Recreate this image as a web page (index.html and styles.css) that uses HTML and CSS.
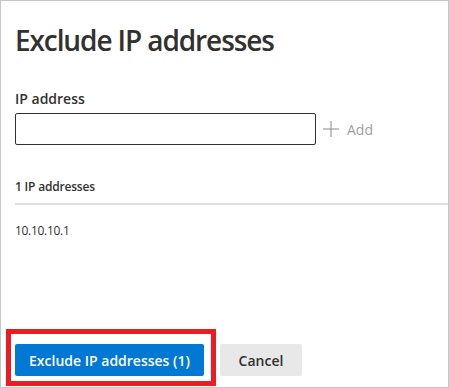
FILE: index.html
```html
<!DOCTYPE html>
<html lang="en">
  <head>
    <meta charset="UTF-8" />
    <meta name="viewport" content="width=device-width, initial-scale=1.0" />
    <title>Exclude IP addresses</title>
    <link rel="stylesheet" href="styles.css">
  </head>

  <body>
    <main class="panel">
      <h1 class="title">Exclude IP addresses</h1>

      <form class="add-form" id="addForm">
        <label class="field-label" for="ipInput">IP address</label>
        <div class="field-row">
          <input class="ip-input" id="ipInput" type="text" />
          <button class="add-btn" type="submit">
            <svg class="add-icon" width="16" height="16" viewBox="0 0 16 16">
              <path d="M8 0v16M0 8h16" stroke="#8a8886" stroke-width="1" fill="none" />
            </svg>
            <span>Add</span>
          </button>
        </div>
      </form>

      <section class="ip-list">
        <p class="list-count">1 IP addresses</p>
        <ul class="list-items">
          <li>10.10.10.1</li>
        </ul>
      </section>

      <footer class="actions">
        <div class="primary-wrap">
          <button class="btn btn-primary">Exclude IP addresses (1)</button>
          <span class="highlight"></span>
        </div>
        <button class="btn btn-default">Cancel</button>
      </footer>
    </main>
  </body>
</html>
```

FILE: styles.css
```css
html,
body {
  margin: 0;
  padding: 0;
}

body {
  font-family: "Open Sans", "Noto Sans", sans-serif;
  color: #323130;
  background: #ffffff;
}

.panel {
  box-sizing: border-box;
  width: 449px;
  height: 388px;
  border: 1px solid #c6c6c6;
  padding: 0 0 0 14px;
  display: flex;
  flex-direction: column;
}

.title {
  margin: 21px 0 0 0;
  font-size: 28px;
  line-height: 36px;
  font-weight: 600;
  letter-spacing: -1.1px;
}

.add-form {
  margin-top: 31px;
}

.field-label {
  display: block;
  font-size: 14px;
  line-height: 20px;
  font-weight: 600;
  margin-bottom: 4px;
}

.field-row {
  display: flex;
  align-items: center;
}

.ip-input {
  box-sizing: border-box;
  width: 301px;
  height: 32px;
  border: 1px solid #323130;
  border-radius: 2px;
  margin: 0;
  padding: 0 8px;
  font: inherit;
  font-size: 14px;
}

.add-btn {
  display: flex;
  align-items: center;
  gap: 8px;
  border: none;
  background: none;
  padding: 0 0 0 7px;
  font-family: inherit;
  font-size: 14px;
  color: #a19f9d;
  cursor: pointer;
}

.ip-list {
  flex-grow: 1;
  margin-top: 32px;
}

.list-count {
  margin: 0;
  font-size: 12px;
  line-height: 20px;
  font-weight: 600;
  letter-spacing: -0.2px;
  padding-bottom: 6px;
  border-bottom: 2px solid #e1dfdd;
}

.list-items {
  list-style: none;
  margin: 0;
  padding: 0;
}

.list-items li {
  font-size: 12px;
  line-height: 20px;
  padding-top: 16px;
  letter-spacing: -0.3px;
}

.actions {
  display: flex;
  gap: 16px;
  padding-bottom: 11px;
}

.primary-wrap {
  position: relative;
}

.btn {
  height: 32px;
  border: none;
  border-radius: 2px;
  font-family: inherit;
  font-size: 14px;
  font-weight: 600;
  cursor: pointer;
}

.btn-primary {
  width: 189px;
  background: #0078d4;
  color: #ffffff;
}

.btn-default {
  width: 82px;
  background: #e8e8e8;
  color: #323130;
}

.highlight {
  position: absolute;
  left: -9px;
  top: -15px;
  right: -12px;
  bottom: -10px;
  border: 5px solid #ed1c24;
  pointer-events: none;
}
```
